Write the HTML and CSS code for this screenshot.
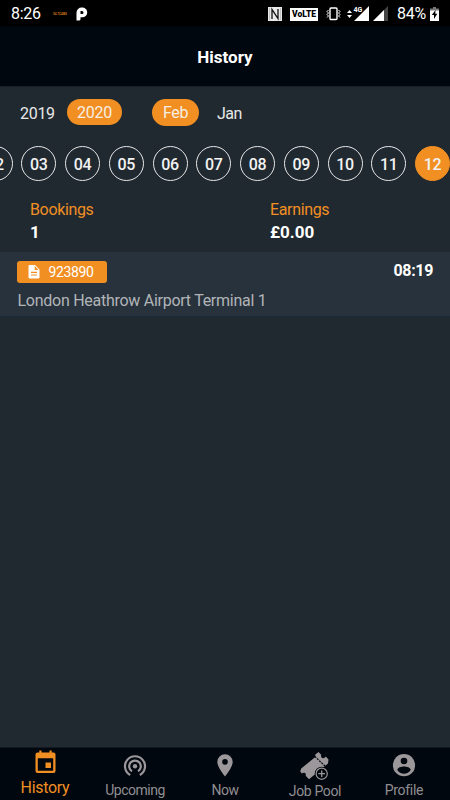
FILE: index.html
```html
<!DOCTYPE html>
<html lang="en">
<head>
<meta charset="utf-8">
<title>History</title>
<link rel="stylesheet" href="styles.css">
</head>
<body>
<div class="app">
  <div class="status">
    <span class="clock">8:26</span>
    <span class="mini">24.7CABS</span>
    <svg class="p-icon" width="12" height="14" viewBox="0 0 12 14"><path fill="#fff" fill-rule="evenodd" d="M.5 13.5V5.5A5.2 5.2 0 0 1 5.7.5C9 .5 11.2 2.500 11.200 5.500S9 10.300 6 10.300H4.500V12Q4.500 13.500 3 13.500ZM4.500 4V7H6Q7.500 7 7.500 5.500T6 4Z"/></svg>
    <span class="spacer"></span>
    <svg class="nfc" width="14" height="14" viewBox="0 0 14 14"><rect width="14" height="14" fill="#e8e8e8"/><path d="M4 12V2.500L10 11.500V2" fill="none" stroke="#111" stroke-width="1.300"/><path d="M1.500 1V13M12.500 1V13" stroke="#aaa" stroke-width=".6"/></svg>
    <span class="volte">VoLTE</span>
    <svg class="vib" width="15" height="14" viewBox="0 0 15 14" fill="none" stroke="#fff"><rect x="4" y="1" width="7" height="11.500" rx="1" stroke-width="1.400"/><path stroke-width="1" d="M2.500 3L1 4.500 2.500 6 1 7.500 2.500 9 1 10.500M12.500 3L14 4.500 12.500 6 14 7.500 12.500 9 14 10.500"/></svg>
    <svg class="signal" width="42" height="16" viewBox="0 0 42 16"><path fill="#fff" d="M0 7L2.500 4 5 7ZM0 9L2.500 12 5 9ZM7 15L22 0V15Z"/><rect x="6" y="0" width="9" height="6.500" fill="#000"/><text class="net" x="6.500" y="5.800">4G</text><path fill="#444" d="M26 15L41 0V15Z"/><path fill="#fff" d="M26 15L37 4V15Z"/></svg>
    <span class="percent">84%</span>
    <svg class="battery" width="9" height="14" viewBox="0 0 9 14"><path fill="#777" d="M3 0H6V1.500H9V4H0V1.500H3Z"/><path fill="#fff" d="M0 3.500H9V14H0Z"/><path fill="#000" d="M5.500 3L1.800 8H4V12L7.300 6.800H5.300Z"/></svg>
  </div>
  <div class="header">History</div>
  <div class="filters">
    <span class="year">2019</span><span class="pill year-on">2020</span><span class="pill month-on">Feb</span><span class="month">Jan</span>
  </div>
  <div class="days">
    <span class="day">02</span><span class="day">03</span><span class="day">04</span><span class="day">05</span><span class="day">06</span><span class="day">07</span><span class="day">08</span><span class="day">09</span><span class="day">10</span><span class="day">11</span><span class="day on">12</span>
  </div>
  <div class="totals">
    <div class="total"><div class="label">Bookings</div><div class="value">1</div></div>
    <div class="total"><div class="label">Earnings</div><div class="value">£0.00</div></div>
  </div>
  <div class="booking">
    <div class="line">
      <span class="ref"><svg width="12" height="14" viewBox="0 0 12 14"><path fill="#fff" fill-rule="evenodd" d="M1.500 0H7L11.500 4.500V12.200Q11.500 13.500 10.200 13.500H1.800Q.5 13.500 .5 12.200V1.300Q.5 0 1.500 0ZM6.700 1V5H10.500ZM3 6.800V8H9V6.800ZM3 9.400V10.600H9V9.400Z"/></svg>923890</span>
      <span class="time">08:19</span>
    </div>
    <div class="place">London Heathrow Airport Terminal 1</div>
  </div>
  <div class="tabs">
    <div class="tab active"><svg width="30" height="27" viewBox="0 0 30 27"><path fill="#f18f23" fill-rule="evenodd" d="M9.300 -.5H11.500V1.500H19.500V-.5H21.700V1.500H23.500Q25.500 1.500 25.500 3.500V20Q25.500 22 23.500 22H7.500Q5.500 22 5.500 20V3.500Q5.500 1.500 7.500 1.500H9.300ZM7.800 7.300V19.800H23.200V7.300ZM15.500 11.500H21V17H15.500Z"/></svg><span>History</span></div>
    <div class="tab"><svg width="30" height="27" viewBox="0 0 30 27"><g fill="none" stroke="#9b979a" stroke-width="2.200"><path d="M10.200 23A10 10 0 1 1 19.800 23"/><path d="M12 19.300A5.800 5.800 0 1 1 18 19.300"/></g><circle cx="15" cy="14.200" r="2.200" fill="#9b979a"/></svg><span>Upcoming</span></div>
    <div class="tab"><svg width="30" height="27" viewBox="0 0 30 27"><path fill="#9b979a" fill-rule="evenodd" d="M15 2.200A7.700 7.700 0 0 1 22.700 9.900C22.700 15.200 15 24.400 15 24.400S7.300 15.200 7.300 9.900A7.700 7.700 0 0 1 15 2.200ZM15 7.100A2.800 2.800 0 1 0 15 12.700A2.800 2.800 0 1 0 15 7.100Z"/></svg><span>Now</span></div>
    <div class="tab pool"><svg width="30" height="29" viewBox="0 0 30 29"><path fill="#9b979a" d="M18.500 0L21.200 2.800Q20.500 5.200 22.300 6 24.300 6.600 25.800 4.600L28.500 7.600 28 11.500 9 27.200 5.700 23.700Q6.300 21 4.300 20.700 2.700 20.400 1.700 21.500L.2 19.300 1.200 16.500 15.300 5V2.500Z"/><path d="M14.800 4.500L25.500 14.500" stroke="#00070f" stroke-width="1.200" stroke-dasharray="2 1"/><circle cx="21.700" cy="21.700" r="7" fill="#00070f"/><circle cx="21.700" cy="21.700" r="5.600" fill="none" stroke="#9b979a" stroke-width="1.200"/><path d="M21.700 18.400V25M18.400 21.700H25" stroke="#9b979a" stroke-width="1.300"/></svg><span>Job Pool</span></div>
    <div class="tab profile"><svg width="30" height="27" viewBox="0 0 30 27"><circle cx="15" cy="13.200" r="11.100" fill="#9b979a"/><circle cx="15" cy="9" r="3.300" fill="#00070f"/><path fill="#00070f" d="M8.300 18C8.300 15.700 12.500 14.600 15 14.600S21.700 15.700 21.700 18A8 8 0 0 1 8.300 18Z"/></svg><span>Profile</span></div>
  </div>
</div>
</body>
</html>
```

FILE: styles.css
```css
* { box-sizing: border-box; }
body { margin: 0; font-family: Roboto, "Liberation Sans", sans-serif; }
.app { width: 450px; height: 800px; display: flex; flex-direction: column; overflow: hidden; background: #212930; color: #fff; }
svg { display: block; flex: none; overflow: visible; }
.status { height: 26px; flex: none; display: flex; align-items: center; padding: 2px 11px 0; background: #000; font-size: 16px; line-height: 24px; }
.clock { width: 42px; letter-spacing: -.3px; }
.mini { width: 23px; font-size: 3px; font-weight: 700; line-height: 6px; color: #d87b16; }
.spacer { flex: 1; }
.nfc { margin-right: 8px; }
.volte { width: 28px; height: 13px; background: #fff; color: #000; font-size: 8.5px; line-height: 13px; font-weight: 900; text-align: center; margin-right: 8px; }
.vib { margin-right: 6px; }
.signal { margin-right: 8px; }
.net { font-size: 7px; font-weight: 700; fill: #fff; }
.percent { width: 33px; letter-spacing: -.3px; }
.header { height: 61px; flex: none; background: #00070f; border-bottom: 1px solid #181f27; text-align: center; font-size: 17px; line-height: 63px; font-weight: 700; }
.filters { height: 52px; flex: none; display: flex; align-items: center; padding-left: 20px; font-size: 16px; letter-spacing: -.3px; color: #e8e8e8; }
.year { width: 46.500px; }
.pill { height: 26px; line-height: 27px; border-radius: 14px; background: #f18f23; color: #f7eee2; text-align: center; }
.year-on { width: 55px; padding-left: 1px; margin: -2px 30.500px 0 0; }
.month-on { width: 47px; height: 27px; margin: -1px 18px 0 0; }
.month { letter-spacing: -.5px; }
.days { display: flex; flex: none; gap: 8.75px; margin: 6px 0 0 -22.5px; height: 36px; padding-top: .5px; }
.day { width: 35px; height: 35px; flex: none; border: 1px solid #e6e7e8; border-radius: 50%; text-align: center; font-size: 16px; line-height: 35px; letter-spacing: -.3px; font-weight: 500; color: #f2f2f2; }
.day.on { background: #f18f23; border-color: #f18f23; }
.totals { height: 71px; flex: none; display: flex; padding: 18px 0 0 30px; }
.total { width: 240px; flex: none; }
.label { color: #f18f23; font-size: 16px; line-height: 22px; letter-spacing: -.35px; }
.value { font-size: 17px; line-height: 22px; font-weight: 700; }
.booking { height: 65px; flex: none; padding: 9px 17px 0; background: #28323c; border-bottom: 1px solid #1c2b39; }
.line { display: flex; justify-content: space-between; align-items: flex-start; }
.ref { display: flex; align-items: center; gap: 8.500px; width: 90px; height: 22px; padding-left: 11px; border-radius: 3px; background: #f18f23; font-size: 14px; letter-spacing: -.35px; }
.time { font-size: 16px; line-height: 19px; font-weight: 700; letter-spacing: -.35px; }
.place { margin-top: 7px; padding-left: .5px; font-size: 16px; line-height: 22px; letter-spacing: -.27px; color: #b1b5b8; }
.tabs { margin-top: auto; height: 53px; flex: none; display: grid; grid-template-columns: repeat(5, 90px); border-top: 1px solid #11181f; background: #00070f; }
.tab { display: flex; flex-direction: column; align-items: center; padding-top: 4px; font-size: 14px; line-height: 20px; letter-spacing: -.5px; color: #918e91; }
.tab span { margin-top: 1px; }
.active { padding-top: 3px; font-size: 16px; letter-spacing: -.3px; color: #f18f23; }
.active span { margin-top: 0; }
.pool { letter-spacing: -.35px; }
.pool span { margin-top: 0; }
.profile { letter-spacing: -.3px; padding-right: 2px; }
```
